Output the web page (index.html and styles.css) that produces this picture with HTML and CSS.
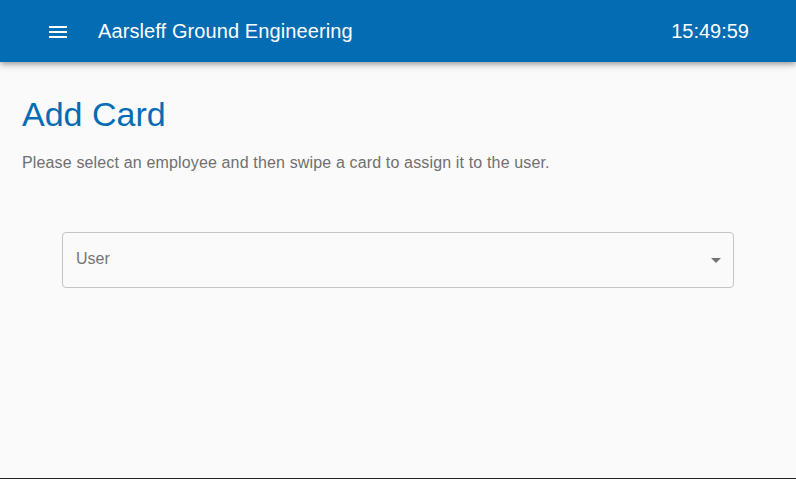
FILE: index.html
```html
<!DOCTYPE html>
<html lang="en">
  <head>
    <meta charset="UTF-8" />
    <meta name="viewport" content="width=device-width, initial-scale=1.0" />
    <title>Add Card</title>
    <link rel="stylesheet" href="styles.css">
  </head>

  <body>
    <header class="topbar">
      <button class="menu-btn" aria-label="menu">
        <svg width="24" height="24" viewBox="0 0 24 24">
          <path d="M3 18h18v-2H3v2zm0-5h18v-2H3v2zm0-7v2h18V6H3z" fill="#fff" />
        </svg>
      </button>
      <div class="app-title">Aarsleff Ground Engineering</div>
      <div class="clock">15:49:59</div>
    </header>

    <main class="content">
      <h1 class="page-title">Add Card</h1>
      <p class="hint">Please select an employee and then swipe a card to assign it to the user.</p>

      <div class="select-wrap">
        <div class="select">
          <span class="select-label">User</span>
          <svg class="select-arrow" width="24" height="24" viewBox="0 0 24 24">
            <path d="M7 10l5 5 5-5z" fill="#757575" />
          </svg>
        </div>
      </div>
    </main>
  </body>
</html>
```

FILE: styles.css
```css
* {
  margin: 0;
  padding: 0;
  box-sizing: border-box;
}

html,
body {
  height: 100%;
}

body {
  font-family: "Liberation Sans", Arial, sans-serif;
  background: #fafafa;
  border-bottom: 1px solid #222;
  overflow: hidden;
}

.topbar {
  height: 62px;
  background: #036cb3;
  color: #fff;
  display: flex;
  align-items: center;
  padding: 0 47px 0 46px;
  box-shadow: 0 2px 4px -1px rgba(0, 0, 0, 0.2), 0 4px 5px 0 rgba(0, 0, 0, 0.14),
    0 1px 10px 0 rgba(0, 0, 0, 0.12);
  position: relative;
  z-index: 2;
}

.menu-btn {
  background: none;
  border: none;
  width: 24px;
  height: 24px;
  display: flex;
  cursor: pointer;
  margin-top: 1px;
}

.app-title {
  font-size: 20px;
  letter-spacing: 0.1px;
  margin-left: 28px;
  flex: 1;
  margin-top: 1px;
}

.clock {
  font-size: 20px;
  margin-top: 1px;
}

.content {
  padding: 32px 22px 0 22px;
}

.page-title {
  font-size: 34px;
  font-weight: normal;
  color: #036cb3;
  line-height: 40px;
}

.hint {
  font-size: 16px;
  letter-spacing: 0.15px;
  color: #707070;
  margin-top: 20px;
}

.select-wrap {
  padding: 0 40px;
  margin-top: 60px;
}

.select {
  height: 56px;
  border: 1px solid #c4c4c4;
  border-radius: 4px;
  display: flex;
  align-items: center;
  padding: 0 5px 0 13px;
}

.select-label {
  flex: 1;
  font-size: 16px;
  color: #757575;
  margin-top: -2px;
}

.select-arrow {
  margin-top: 0;
}
```
